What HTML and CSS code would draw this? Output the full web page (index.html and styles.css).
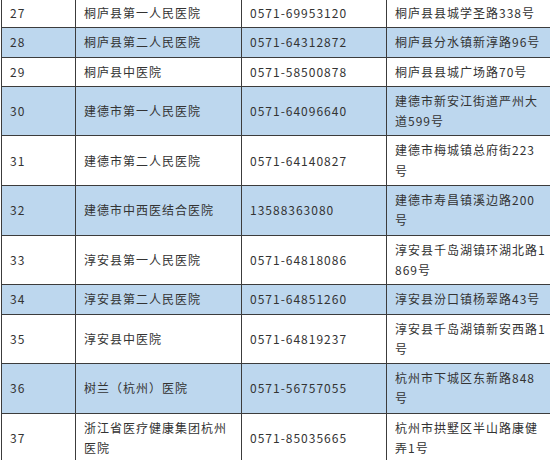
FILE: index.html
```html
<!DOCTYPE html>
<html lang="zh-CN">
<head>
<meta charset="utf-8">
<title>医院列表</title>
<link rel="stylesheet" href="styles.css">
</head>
<body>
<div class="viewport">
<table class="list">
  <colgroup>
    <col class="c-no"><col class="c-name"><col class="c-tel"><col class="c-addr">
  </colgroup>
  <tbody>
    <tr><td>27</td><td>桐庐县第一人民医院</td><td>0571-69953120</td><td>桐庐县县城学圣路338号</td></tr>
    <tr class="alt"><td>28</td><td>桐庐县第二人民医院</td><td>0571-64312872</td><td>桐庐县分水镇新淳路96号</td></tr>
    <tr><td>29</td><td>桐庐县中医院</td><td>0571-58500878</td><td>桐庐县县城广场路70号</td></tr>
    <tr class="alt"><td>30</td><td>建德市第一人民医院</td><td>0571-64096640</td><td>建德市新安江街道严州大<br>道599号</td></tr>
    <tr><td>31</td><td>建德市第二人民医院</td><td>0571-64140827</td><td>建德市梅城镇总府街223<br>号</td></tr>
    <tr class="alt"><td>32</td><td>建德市中西医结合医院</td><td>13588363080</td><td>建德市寿昌镇溪边路200<br>号</td></tr>
    <tr><td>33</td><td>淳安县第一人民医院</td><td>0571-64818086</td><td>淳安县千岛湖镇环湖北路1<br>869号</td></tr>
    <tr class="alt"><td>34</td><td>淳安县第二人民医院</td><td>0571-64851260</td><td>淳安县汾口镇杨翠路43号</td></tr>
    <tr><td>35</td><td>淳安县中医院</td><td>0571-64819237</td><td>淳安县千岛湖镇新安西路1<br>号</td></tr>
    <tr class="alt"><td>36</td><td>树兰（杭州）医院</td><td>0571-56757055</td><td>杭州市下城区东新路848<br>号</td></tr>
    <tr><td>37</td><td>浙江省医疗健康集团杭州<br>医院</td><td>0571-85035665</td><td>杭州市拱墅区半山路康健<br>弄1号</td></tr>
  </tbody>
</table>
</div>
</body>
</html>
```
FILE: styles.css
```css
html, body {
  margin: 0;
  padding: 0;
  background: #ffffff;
}
.viewport {
  width: 550px;
  height: 460px;
  overflow: hidden;
}
.list {
  margin: -2px 0 0 1px;
  border-collapse: collapse;
  table-layout: fixed;
  width: 560px;
  font-family: "Noto Sans CJK SC", "Liberation Sans", sans-serif;
  font-size: 12px;
  letter-spacing: 1px;
  color: #333333;
}
.c-no { width: 74px; }
.c-name { width: 166px; }
.c-tel { width: 145px; }
.c-addr { width: 175px; }
.list td {
  border: 1px solid #3c3c3c;
  padding: 4px 8px;
  line-height: 20.3px;
  vertical-align: middle;
  white-space: nowrap;
  text-align: left;
}
.list tr.alt td {
  background: #bdd7ee;
}
```
